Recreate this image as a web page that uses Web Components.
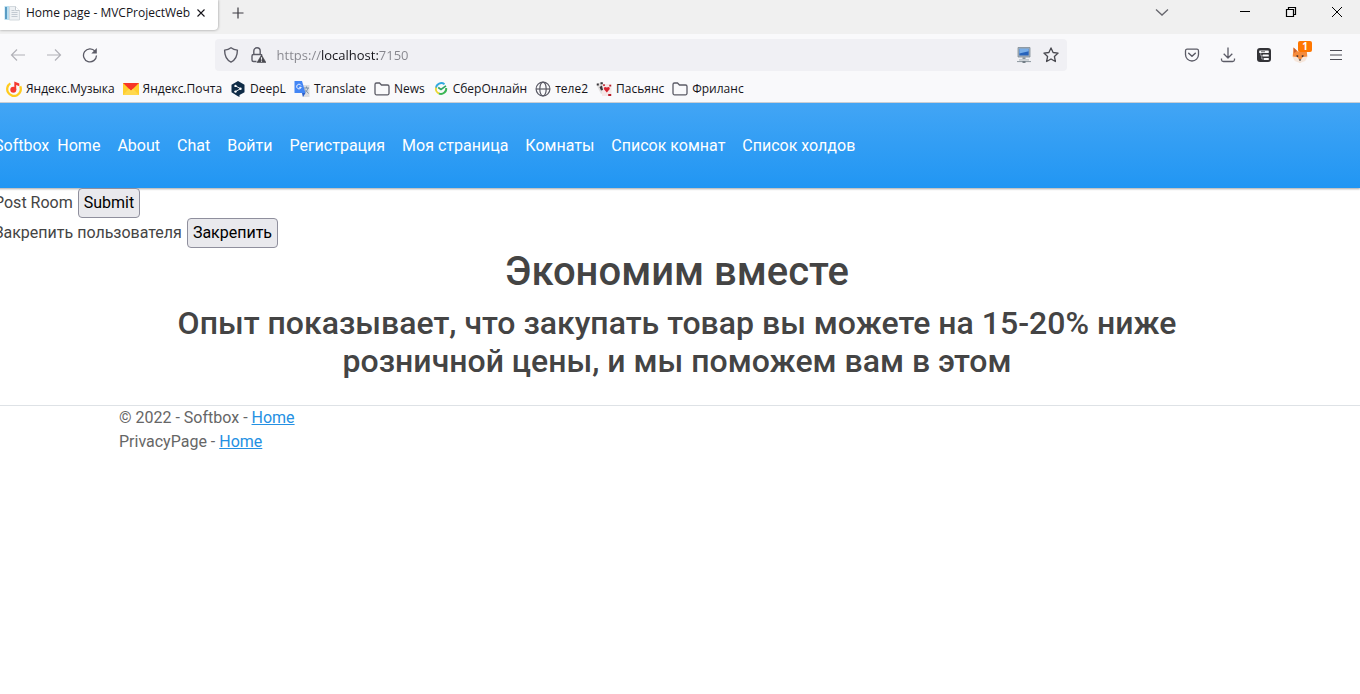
<!DOCTYPE html>
<html lang="ru">
<head>
<meta charset="utf-8">
<meta name="viewport" content="width=device-width, initial-scale=1">
<title>Home page - MVCProjectWeb</title>
<style>
html, body { margin: 0; min-height: 100%; background: #fff; }
body { overflow-x: hidden; font: 16px/24px Roboto, "Liberation Sans", sans-serif; color: #444; }
</style>
</head>
<body>
<browser-window></browser-window>
<site-page></site-page>

<script>
const ICONS = {
  page: '<path d="M0.500 1h5v14h-5z" fill="#b9def0"/><path d="M1 2h2v12H1z" fill="#5a9cc4"/><path d="M5.500 1.500h6l4 4v9.500h-10z" fill="#eef1f4" stroke="#d3d9de"/><path d="M11.500 1.500v4h4" fill="#fff" stroke="#c3cad0"/><path d="M7.500 5.500h3M7.500 7.500h6M7.500 9.500h6M7.500 11.500h6" stroke="#c3cad2"/>',
  close: '<path d="M4.500 4.500l7 7M11.500 4.500l-7 7" stroke="#15141a" stroke-width="1.100"/>',
  plus: '<path d="M8 2.500v11M2.500 8h11" stroke="#3c3b42" stroke-width="1.200"/>',
  chevron: '<path d="M2 5.500l6 5.500 6-5.500" stroke="#66666d" stroke-width="1.300"/>',
  minimize: '<path d="M3 7.500h10" stroke="#000"/>',
  restore: '<path d="M3.500 5.500h7v7h-7zM5.500 5.500v-2h7v7h-2" stroke="#000" stroke-width="1.200"/>',
  exit: '<path d="M3 3l10 10M13 3L3 13" stroke="#000"/>',
  back: '<path d="M15 8H1.500M7 2.500L1.500 8 7 13.500" stroke="#b2b2b8" stroke-width="1.200"/>',
  forward: '<path d="M1 8h13.500M9 2.500L14.500 8 9 13.500" stroke="#b2b2b8" stroke-width="1.200"/>',
  reload: '<path d="M13 4.200A6.500 6.500 0 1 0 14.500 8.500" stroke="#5b5b66" stroke-width="1.300"/><path d="M14.800 1v5.500H9.300z" fill="#5b5b66"/>',
  shield: '<path d="M8 .800C6 2.300 4 2.900 1.600 3.100c0 5.600 1.200 9.700 6.400 12 5.200-2.300 6.400-6.400 6.400-12C12 2.900 10 2.300 8 .8z" stroke="#5b5b66" stroke-width="1.400" stroke-linejoin="round"/>',
  lock: '<path d="M6.500 14.500h-3A1.500 1.500 0 0 1 2 13V9a1.500 1.500 0 0 1 1.500-1.500h7A1.500 1.500 0 0 1 12 8.500M3.800 7.500V4a3.200 3.200 0 0 1 6.400 0v3.500" stroke="#5b5b66" stroke-width="1.400"/><path d="M11.500 8L16 15.600H7z" fill="#48484f" stroke="#48484f" stroke-width=".6" stroke-linejoin="round"/><path d="M11.500 10.200v2.600M11.500 13.500v1.200" stroke="#f0f0f4" stroke-width="1.100"/>',
  computer: '<path d="M2 .500h12v9.500H2z" fill="#a9b4bd" stroke="#7f8b95" stroke-width=".8"/><path d="M3.300 1.800h9.400v6.700H3.300z" fill="#2763bb"/><path d="M3.300 1.800h9.400v2.400L3.300 6.500z" fill="#79aee8"/><path d="M6.500 10.300h3v2.200h-3z" fill="#87929b"/><path d="M3 12h10v1.800H3z" fill="#c5cbd0"/><path d="M1 14.600h14" stroke="#8b959d"/><path d="M6.500 14h3v2h-3z" fill="#747e87"/>',
  star: '<path d="M8 .900l2.100 4.600 5 .600-3.700 3.400 1 5L8 12l-4.400 2.500 1-5L.900 6.100l5-.6z" stroke="#48484f" stroke-width="1.300" stroke-linejoin="round"/>',
  pocket: '<path d="M3 2.200h10A1.700 1.700 0 0 1 14.500 4v3.500a6.500 6.500 0 0 1-13 0V4A1.700 1.700 0 0 1 3 2.200z" stroke="#5b5b66" stroke-width="1.300"/><path d="M4.700 6.200L8 9.300l3.300-3.100" stroke="#5b5b66" stroke-width="1.500" stroke-linecap="round" stroke-linejoin="round"/>',
  download: '<path d="M8 .500v10.500M3.700 6.800L8 11l4.300-4.200M1.500 11.500v1.200A2 2 0 0 0 3.500 14.500h9a2 2 0 0 0 2-1.800v-1.200" stroke="#5b5b66" stroke-width="1.300" stroke-linejoin="round"/>',
  addon: '<rect x="1" y="1" width="14" height="14" rx="3" fill="#333337"/><rect x="3.200" y="3.400" width="9.600" height="2.600" rx=".6" fill="#f9f9fb"/><rect x="6.600" y="7.600" width="6.200" height="2" rx=".5" fill="#f9f9fb"/><rect x="7.800" y="11" width="5" height="2" rx=".5" fill="#f9f9fb"/><path d="M4.800 6v2.600h2M5.800 9v3h2" stroke="#c9c9ce" stroke-width=".7"/><path d="M5 4.700h4" stroke="#333337" stroke-width=".7"/>',
  fox: '<path d="M1.500 .500L6 4.500h4L14.500 1l.8 8.500L12 13.500 8 15.500l-4-2L.700 9.500z" fill="#f58b3c"/><path d="M1.500 .500L2 6l3-2z" fill="#c9602d"/><path d="M.300 9.500l4.700.500 2.300 2.500h1.400L11 10l4.700-.5-2.500 4.500L8 16l-5.200-2z" fill="#f6e6da"/><path d="M4.300 8.300h1.900v1.600H4.900zM11.700 8.300H9.800v1.600h1.300z" fill="#4a3630"/><path d="M6.600 12.400h2.800L8 14z" fill="#222"/>',
  menu: '<path d="M2 3.500h12M2 8h12M2 12.500h12" stroke="#4d4d56" stroke-width="1.200"/>',
  music: '<path d="M4.300 2.400A6.800 6.800 0 1 0 14.200 5.300" stroke="#ffcb1f" stroke-width="2.300"/><circle cx="7.300" cy="8.800" r="3" fill="#f5392f"/><path d="M8.300 9V.500l5 2v2.800L10.200 4v5z" fill="#f5392f"/>',
  mail: '<path d="M0 2h16v12H0z" fill="#ffce2e"/><path d="M0 2h16L8 9.800z" fill="#f73528"/><path d="M0 14l6-6.200L8 9.800l2-2L16 14z" fill="#ffd84e"/>',
  deepl: '<path d="M8 0l6.500 3.800v7.500L9.500 14v2L7.500 15 1.500 11.300V3.800z" fill="#0f2b46"/><path d="M5.500 4.900l5 2.800-5 2.900" stroke="#fff" stroke-width=".9"/><g fill="#fff"><circle cx="5.500" cy="4.900" r="1.200"/><circle cx="10.500" cy="7.700" r="1.200"/><circle cx="5.500" cy="10.600" r="1.200"/></g>',
  translate: '<path d="M6 4h9.500v12H8.500z" fill="#dcdde0"/><path d="M.500 0H8l3.500 12h-11z" fill="#4386f5"/><path d="M8 12h3.500L9 16z" fill="#2a5fca"/><path d="M7 4.400A2.300 2.300 0 1 0 7.200 6.300H5.200" stroke="#fff" stroke-width="1"/><path d="M10 7h5M12.500 5.500V7M14 7c-.500 2-1.700 3.500-3 4.500M11 8.500l3.500 4" stroke="#7990a8"/>',
  folder: '<path d="M1 3.500a1.500 1.500 0 0 1 1.500-1.500h3L7.500 4h6A1.500 1.500 0 0 1 15 5.500v6.800a1.500 1.500 0 0 1-1.500 1.500h-11A1.500 1.500 0 0 1 1 12.300z" stroke="#5b5b66" stroke-width="1.300"/>',
  sber: '<path d="M11.500 3.200A5.300 5.300 0 0 0 3 7" stroke="#31a9df" stroke-width="1.900"/><path d="M3 6.500a5.300 5.300 0 0 0 3.500 6.200" stroke="#e9d733" stroke-width="1.900"/><path d="M6 12.600A5.300 5.300 0 0 0 13.200 7" stroke="#3bb655" stroke-width="1.900"/><path d="M5.200 6.500L8 8.500 13 4.800" stroke="#2fa565" stroke-width="1.600"/>',
  globe: '<circle cx="8" cy="8" r="6.900" stroke="#5b5b66" stroke-width="1.200"/><ellipse cx="8" cy="8" rx="3.200" ry="6.900" stroke="#5b5b66" stroke-width="1.200"/><path d="M1 8h14" stroke="#5b5b66" stroke-width="1.200"/>',
  cards: '<path d="M0 3l6-2 4 10-5 2z" fill="#e4e0e0"/><path d="M6 3h9.500v12H6z" fill="#f6e6e6"/><path d="M.800 2.500h2v2h-2zM4.500 1.200h2.300v2H4.500zM3.500 6l2.500-1.500L7 9 5 9.500z" fill="#39383c"/><path d="M10.800 11.400L7.800 8Q7.800 4.800 10.800 6.500 13.800 4.800 13.800 8z" fill="#d8232f"/><path d="M13.300 3.800h1.900v1.700h-1.900zM12.200 13h3v2h-3zM7.200 3.300h1.600V5H7.200z" fill="#b81d29"/>'
};

function register(name, css, html) {
  customElements.define(name, class extends HTMLElement {
    constructor() {
      super();
      const t = document.createElement('template');
      t.innerHTML = `<style>:host,*{box-sizing:border-box}${css}</style>${html}`;
      this.attachShadow({ mode: 'open' }).append(t.content.cloneNode(true));
    }
  });
}

customElements.define('ui-icon', class extends HTMLElement {
  connectedCallback() {
    if (this.shadowRoot) return;
    this.attachShadow({ mode: 'open' }).innerHTML =
      `<style>:host{display:block;flex:none;width:16px;height:16px}svg{display:block;width:100%;height:100%}</style>
       <svg viewBox="0 0 16 16" fill="none" aria-hidden="true">${ICONS[this.getAttribute('name')]}</svg>`;
  }
});

customElements.define('tool-button', class extends HTMLElement {
  connectedCallback() {
    if (this.shadowRoot) return;
    this.attachShadow({ mode: 'open' }).innerHTML =
      `<style>
        :host{display:flex;flex:none;width:36px;height:32px}
        button{flex:1;display:grid;place-items:center;position:relative;padding:0;border:0;background:none;color:inherit;font:inherit}
        ::slotted(b){position:absolute;top:2px;right:6px;width:14px;height:11px;border-radius:2px;background:#f70;color:#fff;font:700 10px/11px "Open Sans",sans-serif;text-align:center}
      </style>
      <button type="button" aria-label="${this.getAttribute('label')}"><ui-icon name="${this.getAttribute('icon')}"></ui-icon><slot></slot></button>`;
  }
});

customElements.define('book-mark', class extends HTMLElement {
  connectedCallback() {
    if (this.shadowRoot) return;
    this.attachShadow({ mode: 'open' }).innerHTML =
      `<style>:host{display:block;white-space:nowrap}a{display:flex;align-items:center;gap:4px;color:inherit;text-decoration:none}</style>
       <a href="#"><ui-icon name="${this.getAttribute('icon')}"></ui-icon><span><slot></slot></span></a>`;
  }
});

register('tab-strip', `
  :host{display:flex;height:34px;background:#f0f0f0}
  .tab{display:flex;align-items:center;gap:3px;width:218px;height:30px;padding:0 9px 4px 4px;background:#fff;border-radius:0 0 4px 0;box-shadow:0 0 3px rgba(0,0,0,.4)}
  .tab span{padding-left:3px;white-space:nowrap}
  .close{display:grid;padding:0;border:0;background:none}
  .new{margin-left:2px;height:26px}
  .window{display:flex;margin-left:auto;height:24px}
  .list{margin-right:42px;height:24px}
  tool-button.w{width:46px;height:24px}`,
  `<div class="tab"><ui-icon name="page"></ui-icon><span>Home page - MVCProjectWeb</span><button class="close" aria-label="Close tab"><ui-icon name="close"></ui-icon></button></div>
   <tool-button class="new" icon="plus" label="New tab"></tool-button>
   <div class="window"><tool-button class="list" icon="chevron" label="List tabs"></tool-button>
   <tool-button class="w" icon="minimize" label="Minimize"></tool-button><tool-button class="w" icon="restore" label="Restore"></tool-button><tool-button class="w" icon="exit" label="Close"></tool-button></div>`);

register('address-bar', `
  :host{display:flex;align-items:center;height:32px;padding:0 8px;gap:11px;background:#f0f0f4;border-radius:4px}
  input{flex:1;min-width:0;padding:0;border:0;outline:0;font:13px/20px "Open Sans","Noto Sans",sans-serif;color:#15141a;
    background:linear-gradient(90deg,#85858c 45px,#15141a 45px 101px,#85858c 101px);-webkit-background-clip:text;background-clip:text;-webkit-text-fill-color:transparent}`,
  `<ui-icon name="shield"></ui-icon><ui-icon name="lock"></ui-icon><input aria-label="Address" value="https://localhost:7150"><ui-icon name="computer"></ui-icon><ui-icon name="star"></ui-icon>`);

register('nav-toolbar', `
  :host{display:flex;align-items:center;height:42px;padding-right:6px}
  i{flex:1 1 0;padding:0 1px} address-bar{flex:8 1 0;min-width:0}`,
  `<tool-button icon="back" label="Back"></tool-button><tool-button icon="forward" label="Forward"></tool-button><tool-button icon="reload" label="Reload"></tool-button>
   <i></i><address-bar></address-bar><i></i>
   <tool-button icon="pocket" label="Pocket"></tool-button><tool-button icon="download" label="Downloads"></tool-button><tool-button icon="addon" label="Extension"></tool-button><tool-button icon="fox" label="Fox extension"><b>1</b></tool-button><tool-button icon="menu" label="Menu"></tool-button>`);

register('bookmarks-bar', `
  :host{display:flex;align-items:center;gap:8px;height:26px;padding:0 6px}`,
  `<book-mark icon="music">Яндекс.Музыка</book-mark><book-mark icon="mail">Яндекс.Почта</book-mark><book-mark icon="deepl">DeepL</book-mark><book-mark icon="translate">Translate</book-mark><book-mark icon="folder">News</book-mark><book-mark icon="sber">СберОнлайн</book-mark><book-mark icon="globe">теле2</book-mark><book-mark icon="cards">Пасьянс</book-mark><book-mark icon="folder">Фриланс</book-mark>`);

register('browser-window', `
  :host{display:block;background:#f9f9fb;border-bottom:1px solid #cfd3da;color:#15141a;font:12px/16px "Open Sans","Noto Sans",sans-serif}`,
  `<tab-strip></tab-strip><nav-toolbar></nav-toolbar><bookmarks-bar></bookmarks-bar>`);

register('site-nav', `
  :host{display:block;background:linear-gradient(#42a5f5,#2196f3);box-shadow:0 1px 2px rgba(0,0,0,.35)}
  nav{display:flex;align-items:center;gap:17px;height:85px}
  a{color:#fff;text-decoration:none;white-space:nowrap}
  a.brand{margin-right:-9px}`,
  `<nav><a class="brand" href="#">Softbox</a><a href="#">Home</a><a href="#">About</a><a href="#">Chat</a><a href="#">Войти</a><a href="#">Регистрация</a><a href="#">Моя страница</a><a href="#">Комнаты</a><a href="#">Список комнат</a><a href="#">Список холдов</a></nav>`);

register('action-form', `
  :host{display:block}
  form{display:flex;align-items:center;gap:5px;height:30px}
  ::slotted(button){height:30px;padding:2px 5px;border:1px solid #8f8f9d;border-radius:4px;background:#e9e9ed;color:#000;font:inherit}`,
  `<form onsubmit="return false"><slot></slot></form>`);

register('hero-block', `
  :host{display:block;max-width:1140px;margin:0 auto;padding:0 12px;text-align:center}
  h1,h2{margin:0 0 8px;font-weight:500}
  h1{font-size:40px;line-height:48px}
  h2{font-size:32px;line-height:38px}`,
  `<h1>Экономим вместе</h1><h2>Опыт показывает, что закупать товар вы можете на 15-20% ниже розничной цены, и мы поможем вам в этом</h2>`);

register('site-footer', `
  :host{display:block;border-top:1px solid #dee2e6;color:#666}
  div{max-width:1140px;margin:0 auto;padding:0 12px}
  a{color:#2490e3}
  p{margin:0}`,
  `<div><p>© 2022 - Softbox - <a href="#">Home</a></p><p>PrivacyPage - <a href="#">Home</a></p></div>`);

register('site-page', `
  :host{display:block;margin-left:-6px}
  main{padding-bottom:17px}`,
  `<site-nav></site-nav>
   <main><action-form>Post Room <button>Submit</button></action-form><action-form>Закрепить пользователя <button>Закрепить</button></action-form><hero-block></hero-block></main>
   <site-footer></site-footer>`);
</script>
</body>
</html>
